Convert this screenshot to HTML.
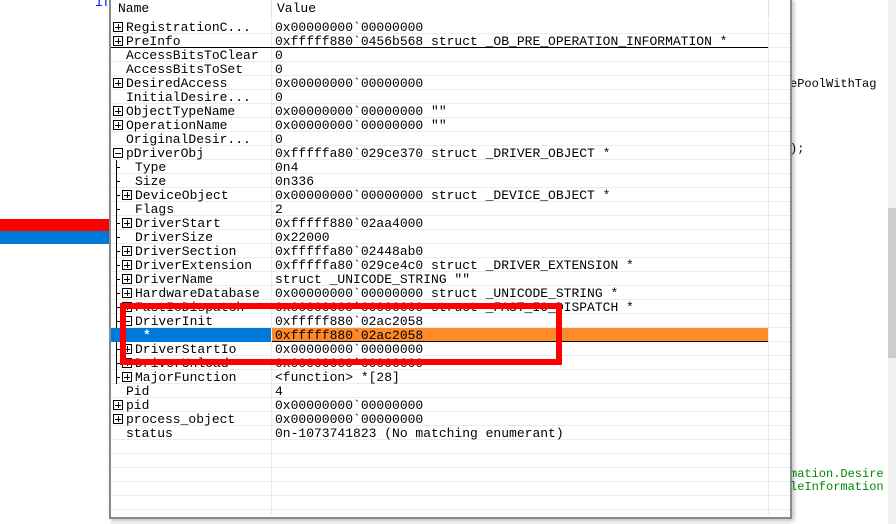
<!DOCTYPE html>
<html><head><meta charset="utf-8"><style>
*{margin:0;padding:0;box-sizing:border-box}
body{width:896px;height:524px;overflow:hidden;background:#fff;position:relative;font-family:"Liberation Mono",monospace;font-size:13px;color:#000}
.a{position:absolute;white-space:pre;line-height:14px}
#pop{position:absolute;left:109px;top:-2px;width:683px;height:521px;background:#fff;border:2px solid #8a8a8a;box-shadow:2px 2px 4px rgba(0,0,0,.25)}
.hl{position:absolute;left:0;height:1px;background:#ececec}
.box{position:absolute;width:10px;height:10px;border:1px solid #000}
.box:before{content:"";position:absolute;left:1px;right:1px;top:3.5px;height:1px;background:#000}
.box.p:after{content:"";position:absolute;top:1px;bottom:1px;left:3.5px;width:1px;background:#000}
.tl{position:absolute;width:1px;background:#000}
.tt{position:absolute;height:1px;width:4px;background:#000}
</style></head><body>
<div class="a" style="left:95px;top:-4px;color:#00f">if</div>
<div style="position:absolute;left:0;top:219px;width:110px;height:12px;background:#f00"></div>
<div style="position:absolute;left:0;top:231px;width:110px;height:13px;background:#0078d7"></div>
<div class="a" style="left:790px;top:77px;font-size:12px">ePoolWithTag</div>
<div class="a" style="left:790px;top:142px;font-size:12px">);</div>
<div class="a" style="left:790px;top:467px;font-size:12px;color:#080">mation.Desire</div>
<div class="a" style="left:790px;top:480px;font-size:12px;color:#080">leInformation</div>
<div style="position:absolute;left:888px;top:0;width:8px;height:524px;background:#f0f0f0"></div>
<div style="position:absolute;left:888px;top:208px;width:8px;height:150px;background:#cdcdcd"></div>
<div style="position:absolute;left:731px;top:462px;width:6px;height:6px;border-radius:3px;background:#f00"></div>
<div id="pop"></div>
<div id="rows"></div>
<div style="position:absolute;left:120px;top:303px;width:442px;height:62px;border:6px solid #f00"></div>
<script>
const R=[
[0,'p','RegistrationC...','0x00000000`00000000'],
[0,'p','PreInfo','0xfffff880`0456b568 struct _OB_PRE_OPERATION_INFORMATION *'],
[0,'','AccessBitsToClear','0'],
[0,'','AccessBitsToSet','0'],
[0,'p','DesiredAccess','0x00000000`00000000'],
[0,'','InitialDesire...','0'],
[0,'p','ObjectTypeName','0x00000000`00000000 ""'],
[0,'p','OperationName','0x00000000`00000000 ""'],
[0,'','OriginalDesir...','0'],
[0,'m','pDriverObj','0xfffffa80`029ce370 struct _DRIVER_OBJECT *'],
[1,'','Type','0n4'],
[1,'','Size','0n336'],
[1,'p','DeviceObject','0x00000000`00000000 struct _DEVICE_OBJECT *'],
[1,'','Flags','2'],
[1,'p','DriverStart','0xfffff880`02aa4000'],
[1,'','DriverSize','0x22000'],
[1,'p','DriverSection','0xfffffa80`02448ab0'],
[1,'p','DriverExtension','0xfffffa80`029ce4c0 struct _DRIVER_EXTENSION *'],
[1,'p','DriverName','struct _UNICODE_STRING ""'],
[1,'p','HardwareDatabase','0x00000000`00000000 struct _UNICODE_STRING *'],
[1,'p','FastIoDispatch','0x00000000`00000000 struct _FAST_IO_DISPATCH *'],
[1,'m','DriverInit','0xfffff880`02ac2058'],
[2,'','*','0xfffff880`02ac2058'],
[1,'p','DriverStartIo','0x00000000`00000000'],
[1,'p','DriverUnload','0x00000000`00000000'],
[1,'p','MajorFunction','<function> *[28]'],
[0,'','Pid','4'],
[0,'p','pid','0x00000000`00000000'],
[0,'p','process_object','0x00000000`00000000'],
[0,'','status','0n-1073741823 (No matching enumerant)']];
let h='';
h+='<div class="a" style="left:118px;top:2px">Name</div><div class="a" style="left:277px;top:2px">Value</div>';
h+='<div style="position:absolute;left:271px;top:0;width:1px;height:18px;background:#e0e0e0"></div>';
h+='<div style="position:absolute;left:768px;top:0;width:1px;height:18px;background:#e0e0e0"></div>';
for(let i=0;i<36;i++){h+=`<div class="hl" style="left:111px;width:679px;top:${33+14*i}px"></div>`}
h+='<div style="position:absolute;left:271px;top:20px;width:1px;height:495px;background:#ececec"></div>';
h+='<div style="position:absolute;left:768px;top:20px;width:1px;height:495px;background:#ececec"></div>';
R.forEach((r,i)=>{const t=20+14*i;const[lv,b,n,v]=r;
 if(i==22){h+=`<div style="position:absolute;left:111px;top:${t}px;width:160px;height:14px;background:#0078d7"></div><div style="position:absolute;left:272px;top:${t}px;width:496px;height:14px;background:#ff8a2a;border-bottom:1px solid #000"></div>`}
 if(i==1){h+=`<div style="position:absolute;left:111px;top:${t+13}px;width:657px;height:1px;background:#000"></div>`}
 let nx=126;
 if(lv==1){h+=`<div class="tl" style="left:116px;top:${t}px;height:14px"></div><div class="tt" style="left:116px;top:${t+7}px"></div>`;nx=135;
  if(b)h+=`<div class="box ${b=='p'?'p':''}" style="left:122px;top:${t+2}px"></div>`;}
 else if(lv==0&&b)h+=`<div class="box ${b=='p'?'p':''}" style="left:113px;top:${t+2}px"></div>`;
 if(lv==2){nx=143;}
 const c=i==22?'color:#fff;font-weight:bold':'';
 h+=`<div class="a" style="left:${nx}px;top:${t+1}px;${c}">${n.replace(/</g,'&lt;')}</div>`;
 h+=`<div class="a" style="left:275px;top:${t+1}px">${v.replace(/</g,'&lt;')}</div>`;
});
document.getElementById('rows').innerHTML=h;
</script>
</body></html>
